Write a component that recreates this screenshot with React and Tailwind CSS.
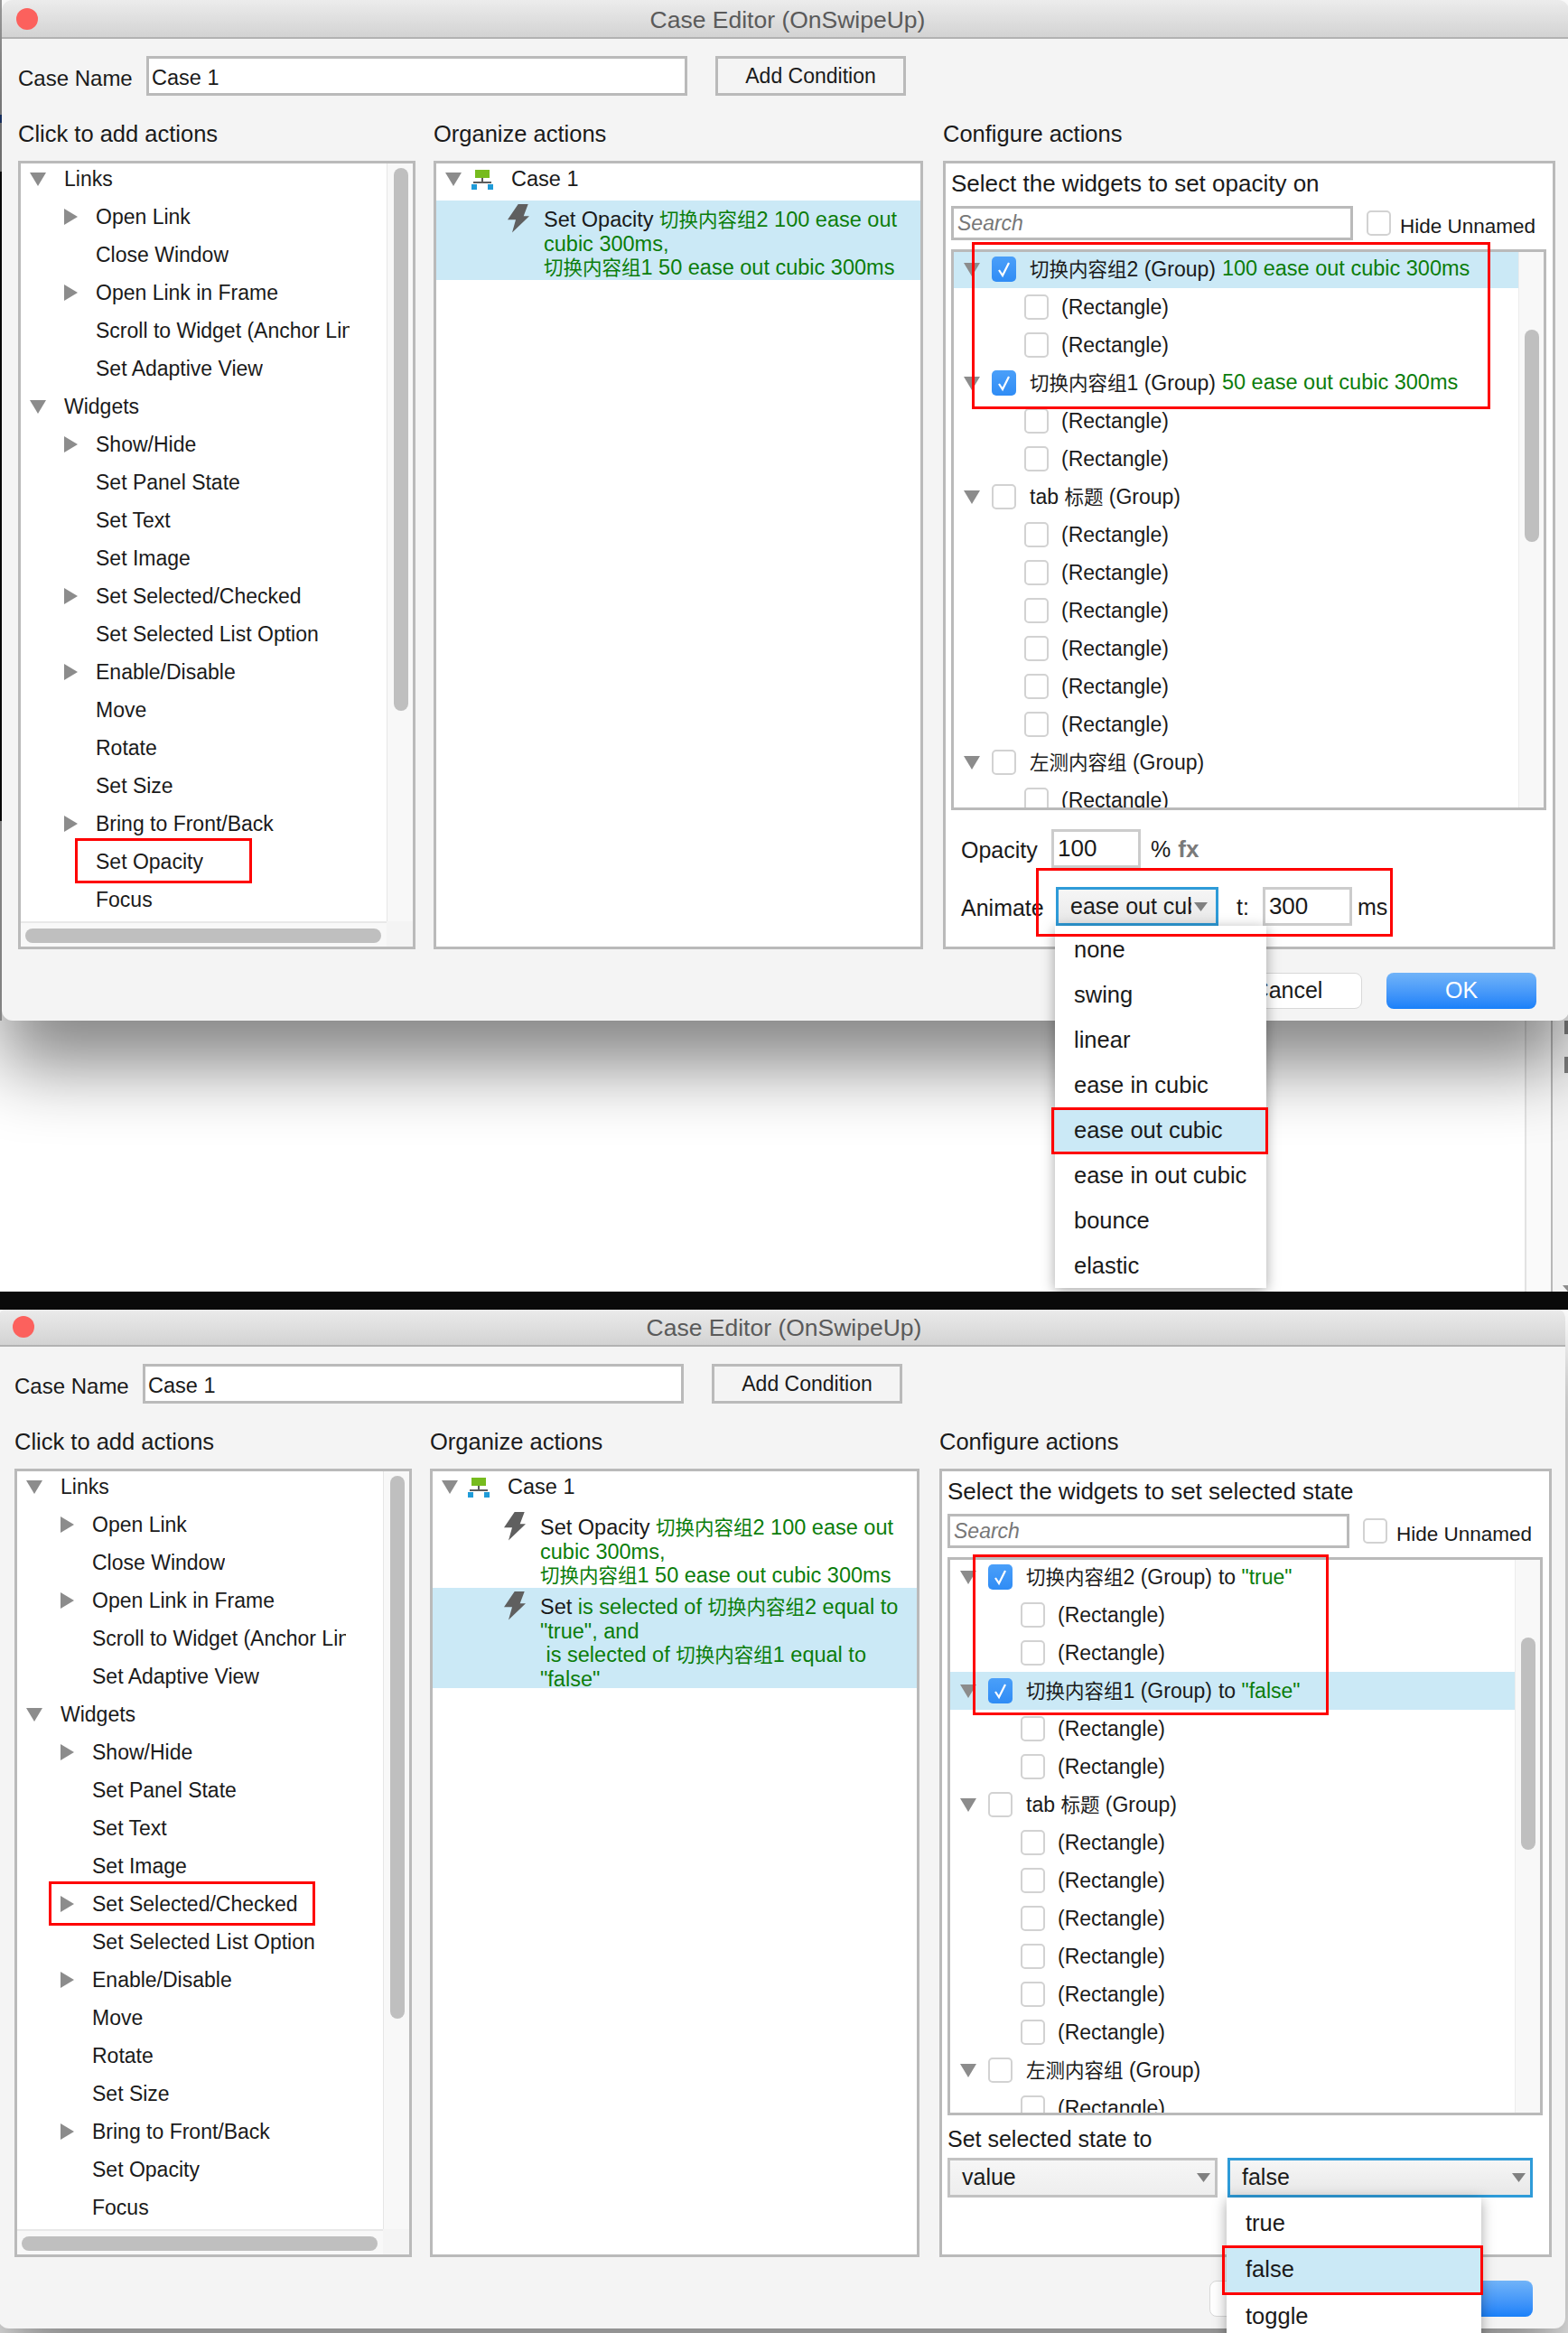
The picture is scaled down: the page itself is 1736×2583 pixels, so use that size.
const GREEN = "text-[#0b7d0b]";

function Cjk({ children }) {
  return <span className="text-[21.5px]">{children}</span>;
}

function TriDown({ className = "" }) {
  return (
    <svg viewBox="0 0 18 15" className={"w-[18px] h-[15px] shrink-0 " + className}>
      <polygon points="0,0 18,0 9,15" fill="#8c8c8c" />
    </svg>
  );
}

function TriRight() {
  return (
    <svg viewBox="0 0 15 18" className="w-[15px] h-[18px] shrink-0">
      <polygon points="0,0 15,9 0,18" fill="#8c8c8c" />
    </svg>
  );
}

function Caret() {
  return (
    <svg viewBox="0 0 15 10" className="w-[15px] h-[10px] shrink-0">
      <polygon points="0,0 15,0 7.5,10" fill="#808080" />
    </svg>
  );
}

function Bolt() {
  return (
    <svg viewBox="0 0 24 32" className="w-[24px] h-[32px] shrink-0">
      <polygon points="11.7,0 22.7,0 17.7,13.3 24,13.3 5,31.5 9,17.3 0,17.3" fill="#5f5f5f" />
    </svg>
  );
}

function CaseIcon() {
  return (
    <svg viewBox="0 0 24 22" className="w-[24px] h-[22px] shrink-0">
      <rect x="4" y="0" width="16" height="9" fill="#76bb1e" />
      <rect x="11" y="9" width="2" height="5" fill="#5c5c5c" />
      <rect x="2" y="13" width="20" height="2" fill="#5c5c5c" />
      <rect x="0" y="16" width="6" height="6" fill="#1f9bd8" />
      <rect x="18" y="16" width="6" height="6" fill="#1f9bd8" />
    </svg>
  );
}

function Check({ checked }) {
  if (checked) {
    return (
      <span className="w-[27px] h-[28px] shrink-0 rounded-[5px] bg-gradient-to-b from-[#4a9ff9] to-[#2f8cf5] flex items-center justify-center">
        <svg viewBox="0 0 27 28" className="w-[27px] h-[28px]">
          <polyline points="8,15 12,21 19,7" fill="none" stroke="#ffffff" strokeWidth="2.2" />
        </svg>
      </span>
    );
  }
  return <span className="w-[27px] h-[28px] shrink-0 rounded-[5px] bg-white border-2 border-[#d2d2d2]" />;
}

function LeftRow({ kind, label, red }) {
  return (
    <div className="relative h-[42px] flex items-center text-[23px] whitespace-nowrap">
      {kind === "head" && (
        <div className="pl-[10px] flex items-center">
          <TriDown />
          <span className="ml-[20px]">{label}</span>
        </div>
      )}
      {kind === "tri" && (
        <div className="pl-[48px] flex items-center">
          <TriRight />
          <span className="ml-[20px]">{label}</span>
        </div>
      )}
      {kind === "leaf" && (
        <div className="pl-[83px] flex items-center">
          <span className="block max-w-[281px] overflow-hidden">{label}</span>
        </div>
      )}
      {red === "opacity" && (
        <div className="absolute left-[60px] top-[-5px] w-[196px] h-[50px] border-[3px] border-[#fe0000]" />
      )}
      {red === "selected" && (
        <div className="absolute left-[35px] top-[-4px] w-[295px] h-[49px] border-[3px] border-[#fe0000]" />
      )}
    </div>
  );
}

const leftRows = [
  ["head", "Links"],
  ["tri", "Open Link"],
  ["leaf", "Close Window"],
  ["tri", "Open Link in Frame"],
  ["leaf", "Scroll to Widget (Anchor Link)"],
  ["leaf", "Set Adaptive View"],
  ["head", "Widgets"],
  ["tri", "Show/Hide"],
  ["leaf", "Set Panel State"],
  ["leaf", "Set Text"],
  ["leaf", "Set Image"],
  ["tri", "Set Selected/Checked"],
  ["leaf", "Set Selected List Option"],
  ["tri", "Enable/Disable"],
  ["leaf", "Move"],
  ["leaf", "Rotate"],
  ["leaf", "Set Size"],
  ["tri", "Bring to Front/Back"],
  ["leaf", "Set Opacity"],
  ["leaf", "Focus"],
];

function LeftPanel({ variant }) {
  return (
    <div className="h-[873px] border-[3px] border-[#bababa] bg-white flex flex-col">
      <div className="h-[839px] flex">
        <div className="w-[405px] h-full overflow-hidden">
          <div className="-mt-[4px]">
            {leftRows.map(([kind, label]) => (
              <LeftRow
                key={label}
                kind={kind}
                label={label}
                red={
                  variant === 1 && label === "Set Opacity"
                    ? "opacity"
                    : variant === 2 && label === "Set Selected/Checked"
                    ? "selected"
                    : undefined
                }
              />
            ))}
          </div>
        </div>
        <div className="w-[29px] bg-[#f8f8f8] border-l border-[#e6e6e6] pl-[7px] pt-[5px]">
          <div className="w-[16px] h-[601px] rounded-full bg-[#bfbfbf]" />
        </div>
      </div>
      <div className="flex-1 flex bg-[#f8f8f8]">
        <div className="w-[405px] border-t-2 border-[#e8e8e8] pl-[5px] pt-[6px]">
          <div className="w-[394px] h-[16px] rounded-full bg-[#bfbfbf]" />
        </div>
        <div className="flex-1 bg-[#f4f4f4]" />
      </div>
    </div>
  );
}

function ActionRow({ active, height, children }) {
  return (
    <div className={"flex pl-[79px] pt-[4px] " + height + (active ? " bg-[#cbe9f6]" : "")}>
      <Bolt />
      <div className="ml-[16px] pt-[4px] text-[23.5px] leading-[26px] whitespace-nowrap">{children}</div>
    </div>
  );
}

function MiddlePanel({ variant }) {
  return (
    <div className="h-[873px] border-[3px] border-[#bababa] bg-white">
      <div className="h-[41px] pb-[6px] pl-[10px] flex items-center text-[23.5px]">
        <TriDown />
        <span className="ml-[11px]"><CaseIcon /></span>
        <span className="ml-[20px]">Case 1</span>
      </div>
      <ActionRow active={variant === 1} height="h-[88px]">
        Set Opacity <span className={GREEN}><Cjk>切换内容组</Cjk>2 100 ease out<br />cubic 300ms,<br /><Cjk>切换内容组</Cjk>1 50 ease out cubic 300ms</span>
      </ActionRow>
      {variant === 2 && (
        <ActionRow active height="h-[111px]">
          Set <span className={GREEN}>is selected of <Cjk>切换内容组</Cjk>2 equal to<br />"true", and<br />&nbsp;is selected of <Cjk>切换内容组</Cjk>1 equal to<br />"false"</span>
        </ActionRow>
      )}
    </div>
  );
}

function GroupRow({ label, active, checked, children }) {
  return (
    <div className={"h-[42px] pl-[11px] flex items-center text-[23px] whitespace-nowrap" + (active ? " bg-[#cbe9f6]" : "")}>
      <TriDown />
      <span className="ml-[13px] flex"><Check checked={checked} /></span>
      <span className="ml-[15px]">{label} (Group)</span>
      {children}
    </div>
  );
}

function RectRow() {
  return (
    <div className="h-[42px] pl-[78px] flex items-center text-[23px]">
      <Check />
      <span className="ml-[14px]">(Rectangle)</span>
    </div>
  );
}

function Tree({ variant }) {
  const rects6 = [0, 1, 2, 3, 4, 5];
  return (
    <div className={"relative mt-[10px] w-[659px] border-[3px] border-[#bababa] bg-white flex " + (variant === 1 ? "h-[621px]" : "h-[618px]")}>
      <div className="w-[625px] h-full overflow-hidden">
        <div className="-mt-[2px]">
          <GroupRow label={<><Cjk>切换内容组</Cjk>2</>} active={variant === 1} checked>
            {variant === 1 ? (
              <span className={"ml-[7px] text-[23.5px] " + GREEN}>100 ease out cubic 300ms</span>
            ) : (
              <span className="ml-[7px]">to <span className={GREEN}>"true"</span></span>
            )}
          </GroupRow>
          <RectRow />
          <RectRow />
          <GroupRow label={<><Cjk>切换内容组</Cjk>1</>} active={variant === 2} checked>
            {variant === 1 ? (
              <span className={"ml-[7px] text-[23.5px] " + GREEN}>50 ease out cubic 300ms</span>
            ) : (
              <span className="ml-[7px]">to <span className={GREEN}>"false"</span></span>
            )}
          </GroupRow>
          <RectRow />
          <RectRow />
          <GroupRow label={<>tab <Cjk>标题</Cjk></>} />
          {rects6.map((i) => <RectRow key={i} />)}
          <GroupRow label={<Cjk>左测内容组</Cjk>} />
          <RectRow />
        </div>
      </div>
      <div className="flex-1 bg-[#f8f8f8] border-l border-[#ececec] pl-[6px] pt-[86px]">
        <div className="w-[16px] h-[235px] rounded-full bg-[#bfbfbf]" />
      </div>
      {variant === 1 ? (
        <div className="absolute left-[20px] top-[-11px] w-[574px] h-[185px] border-[3px] border-[#fe0000]" />
      ) : (
        <div className="absolute left-[25px] top-[-6px] w-[394px] h-[178px] border-[3px] border-[#fe0000]" />
      )}
    </div>
  );
}

function MenuItem({ label, active, tall, children }) {
  return (
    <div className={"relative flex items-center pl-[21px] text-[25.5px] " + (tall ? "h-[51.5px]" : "h-[50px]") + (active ? " bg-[#cbe9f6]" : "")}>
      {label}
      {children}
    </div>
  );
}

function OpacityControls() {
  return (
    <div className="pl-[11px] text-[25px]">
      <div className="mt-[21px] h-[43px] flex items-center">
        <span className="w-[100px] pt-[5px]">Opacity</span>
        <span className="w-[99px] h-[43px] border-[3px] border-[#cccccc] bg-white pl-[4px] flex items-center text-[26px]">100</span>
        <span className="ml-[11px] pt-[2px]">%</span>
        <span className="ml-[8px] pt-[2px] font-bold text-[26px] text-[#7a7a7a]">fx</span>
      </div>
      <div className="relative mt-[21px] h-[43px] flex items-center">
        <span className="w-[105px] pt-[5px]">Animate</span>
        <div className="relative w-[180px] h-[43px] border-[3px] border-[#2e9bd8] bg-gradient-to-b from-[#f6f6f6] to-[#e8e8e8] pl-[13px] pr-[4px] flex items-center">
          <span className="block w-[134px] overflow-hidden whitespace-nowrap">ease out cubic</span>
          <span className="ml-[3px]"><Caret /></span>
          <div className="absolute z-20 left-[-4px] top-[40px] w-[234px] h-[401px] bg-white shadow-[0_3px_14px_rgba(0,0,0,0.35)] pt-[1px]">
            <MenuItem label="none" />
            <MenuItem label="swing" />
            <MenuItem label="linear" />
            <MenuItem label="ease in cubic" />
            <MenuItem label="ease out cubic" active>
              <div className="absolute left-[-4px] top-[0px] w-[240px] h-[52px] border-[3px] border-[#fe0000]" />
            </MenuItem>
            <MenuItem label="ease in out cubic" />
            <MenuItem label="bounce" />
            <MenuItem label="elastic" />
          </div>
        </div>
        <span className="ml-[20px] pt-[2px]">t:</span>
        <span className="ml-[15px] w-[99px] h-[43px] border-[3px] border-[#cccccc] bg-white pl-[4px] flex items-center text-[26px]">300</span>
        <span className="ml-[6px] pt-[2px]">ms</span>
        <div className="absolute z-30 left-[83px] top-[-21px] w-[395px] h-[76px] border-[3px] border-[#fe0000]" />
      </div>
    </div>
  );
}

function SelectedControls() {
  return (
    <div className="text-[25px]">
      <div className="mt-[11px] h-[32px] flex items-center">Set selected state to</div>
      <div className="mt-[4px] flex gap-[11px]">
        <div className="w-[299px] h-[44px] border-[3px] border-[#c2c2c2] bg-gradient-to-b from-[#f6f6f6] to-[#eeeeee] pl-[13px] pr-[5px] flex items-center justify-between">
          value
          <Caret />
        </div>
        <div className="relative w-[338px] h-[44px] border-[3px] border-[#2e9bd8] bg-gradient-to-b from-[#f6f6f6] to-[#e8e8e8] pl-[13px] pr-[5px] flex items-center justify-between">
          false
          <Caret />
          <div className="absolute z-20 left-[-4px] top-[41px] w-[282px] h-[190px] bg-white shadow-[0_3px_14px_rgba(0,0,0,0.35)] pt-[2px]">
            <MenuItem label="true" tall />
            <MenuItem label="false" tall active>
              <div className="absolute left-[-5px] top-[-1px] w-[289px] h-[55px] border-[3px] border-[#fe0000]" />
            </MenuItem>
            <MenuItem label="toggle" tall />
          </div>
        </div>
      </div>
    </div>
  );
}

function RightPanel({ variant }) {
  return (
    <div className="h-[873px] border-[3px] border-[#bababa] bg-white pl-[6px]">
      <div className="h-[44px] pt-[1px] flex items-center text-[26px]">
        {variant === 1 ? "Select the widgets to set opacity on" : "Select the widgets to set selected state"}
      </div>
      <div className="mt-[3px] h-[38px] flex items-center">
        <div className="w-[445px] h-[38px] border-[3px] border-[#bababa] bg-white pl-[4px] pt-[1px] flex items-center text-[23px] italic text-[#777777]">Search</div>
        <span className="ml-[15px] flex"><Check /></span>
        <span className="ml-[10px] mt-[7px] text-[22.5px]">Hide Unnamed</span>
      </div>
      <Tree variant={variant} />
      {variant === 1 ? <OpacityControls /> : <SelectedControls />}
    </div>
  );
}

function Dialog({ variant }) {
  return (
    <div className="relative z-10 w-[1735px] h-[1130px] shrink-0 bg-[#f4f4f4] rounded-[12px] shadow-[0_50px_80px_rgba(0,0,0,0.48)] text-[#1a1a1a]">
      <div className="h-[43px] rounded-t-[12px] border-b-2 border-[#b2b2b2] bg-gradient-to-b from-[#ececec] to-[#d3d3d3] grid grid-cols-[1fr_auto_1fr] items-center pl-[16px] pr-[11px]">
        <span className="w-[24px] h-[24px] rounded-full bg-[#fc615d]" />
        <span className="pt-[3px] text-[26.5px] text-[#5a5a5a]">Case Editor (OnSwipeUp)</span>
        <span />
      </div>
      <div className="pl-[18px]">
        <div className="mt-[19px] h-[44px] flex items-center text-[24px]">
          <span className="w-[142px] pt-[6px]">Case Name</span>
          <div className="w-[599px] h-[44px] border-[3px] border-[#bababa] bg-white pl-[3px] pt-[6px] flex items-center text-[23.5px]">Case 1</div>
          <div className="ml-[31px] w-[211px] h-[44px] border-[3px] border-[#bababa] bg-[#f4f4f4] flex items-center justify-center text-[23px]">Add Condition</div>
        </div>
        <div className="mt-[27px] grid grid-cols-[440px_542px_680px] gap-x-[20px]">
          <div>
            <div className="h-[30px] flex items-center text-[25.5px]">Click to add actions</div>
            <div className="mt-[15px]"><LeftPanel variant={variant} /></div>
          </div>
          <div>
            <div className="h-[30px] flex items-center text-[25.5px]">Organize actions</div>
            <div className="mt-[15px]"><MiddlePanel variant={variant} /></div>
          </div>
          <div className="ml-[2px]">
            <div className="h-[30px] flex items-center text-[25.5px]">Configure actions</div>
            <div className="mt-[15px]"><RightPanel variant={variant} /></div>
          </div>
        </div>
      </div>
      <div className="mt-[26px] pr-[36px] flex justify-end gap-[27px] text-[25px]">
        <div className="w-[165px] h-[40px] rounded-[8px] bg-white border border-[#d8d8d8] flex items-center justify-center">Cancel</div>
        <div className="w-[166px] h-[40px] rounded-[8px] bg-gradient-to-b from-[#70b3f8] to-[#1880f9] text-white flex items-center justify-center">OK</div>
      </div>
    </div>
  );
}

export default function App() {
  return (
    <div className="w-[1736px] h-[2583px] overflow-hidden bg-white font-['Liberation_Sans','Noto_Sans_CJK_SC',sans-serif]">
      <section className="h-[1430px] overflow-hidden flex flex-col">
        <div className="flex">
          <div className="w-[2px] shrink-0 flex flex-col">
            <div className="h-[127px] bg-[#9a9a9a]" />
            <div className="h-[9px] bg-[#1d3c78]" />
            <div className="h-[54px] bg-[#8f8f8f]" />
            <div className="h-[719px] bg-[#0c0c0c]" />
            <div className="flex-1 bg-[#a8a8a8]" />
          </div>
          <Dialog variant={1} />
        </div>
        <div className="flex-1 flex">
          <div className="w-[1688px] bg-white" />
          <div className="w-[2px] bg-[#e2e2e2]" />
          <div className="w-[27px] bg-[#fafafa]" />
          <div className="w-[2px] bg-[#b8b8b8]" />
          <div className="flex-1 bg-[#f4f4f4] flex flex-col items-end">
            <div className="w-[4px] h-[15px] bg-[#808080]" />
            <div className="mt-[25px] w-[4px] h-[18px] bg-[#808080]" />
            <svg viewBox="0 0 6 7" className="mt-auto w-[6px] h-[7px]">
              <polygon points="0,0 6,0 6,7" fill="#8c8c8c" />
            </svg>
          </div>
        </div>
      </section>
      <div className="h-[20px] bg-[#0a0a0a]" />
      <section className="h-[1133px] overflow-hidden">
        <div className="-ml-[2px] -mt-[2px]">
          <Dialog variant={2} />
        </div>
      </section>
    </div>
  );
}
